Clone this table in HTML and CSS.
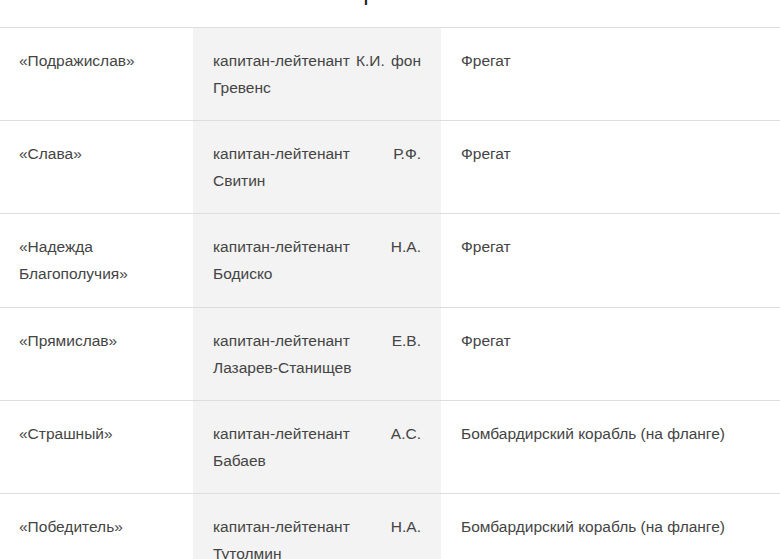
FILE: index.html
```html
<!DOCTYPE html>
<html lang="ru">
<head>
<meta charset="utf-8">
<link rel="stylesheet" href="styles.css">
</head>
<body>
<h2 class="title">Корабли</h2>
<table class="ships">
<colgroup>
<col class="c1"><col class="c2"><col class="c3">
</colgroup>
<tbody>
<tr><td>«Подражислав»</td><td class="cmd">капитан-лейтенант К.И. фон Гревенс</td><td>Фрегат</td></tr>
<tr><td>«Слава»</td><td class="cmd">капитан-лейтенант Р.Ф. Свитин</td><td>Фрегат</td></tr>
<tr><td>«Надежда Благополучия»</td><td class="cmd">капитан-лейтенант Н.А. Бодиско</td><td>Фрегат</td></tr>
<tr><td>«Прямислав»</td><td class="cmd">капитан-лейтенант Е.В. Лазарев-Станищев</td><td>Фрегат</td></tr>
<tr><td>«Страшный»</td><td class="cmd">капитан-лейтенант А.С. Бабаев</td><td>Бомбардирский корабль (на фланге)</td></tr>
<tr><td>«Победитель»</td><td class="cmd">капитан-лейтенант Н.А. Тутолмин</td><td>Бомбардирский корабль (на фланге)</td></tr>
</tbody>
</table>
</body>
</html>
```
FILE: styles.css
```css
html, body {
  margin: 0;
  padding: 0;
  background: #fff;
}
body {
  font-family: "Liberation Sans", Arial, sans-serif;
  color: #444;
  overflow: hidden;
}
.title {
  margin: -22px 0 0;
  padding-right: 14px;
  height: 49px;
  line-height: 28px;
  font-size: 24px;
  font-weight: normal;
  text-align: center;
  color: #222;
  overflow: hidden;
}
.ships {
  width: 100%;
  border-collapse: collapse;
  table-layout: fixed;
  font-size: 15.5px;
  line-height: 27.1px;
}
.c1 { width: 193px; }
.c2 { width: 248px; }
.ships td {
  border-top: 1px solid #ddd;
  padding: 19px 20px 19px 19px;
  vertical-align: top;
  text-align: left;
}
.ships td.cmd {
  background: #f3f3f3;
  text-align: justify;
  padding-left: 20px;
}
.ships td:nth-child(3) {
  padding-left: 20px;
}
```
